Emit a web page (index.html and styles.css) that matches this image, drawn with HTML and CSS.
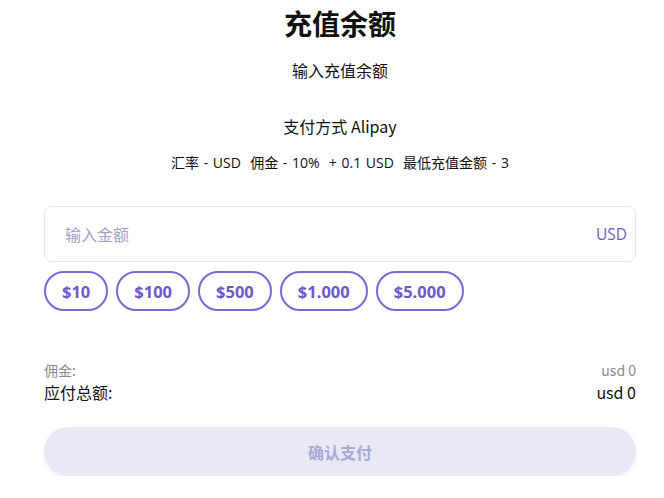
FILE: index.html
```html
<!DOCTYPE html>
<html lang="zh">
<head>
<meta charset="utf-8">
<link rel="stylesheet" href="styles.css">
</head>
<body>
<main class="page">
  <h1 class="title">充值余额</h1>
  <p class="subtitle">输入充值余额</p>
  <p class="method">支付方式 Alipay</p>
  <p class="rates">汇率 - USD&nbsp; 佣金 - 10% &nbsp;+ 0.1 USD&nbsp; 最低充值金额 - 3</p>
  <div class="amount">
    <span class="placeholder">输入金额</span>
    <span class="currency">USD</span>
  </div>
  <div class="chips">
    <button class="chip">$10</button>
    <button class="chip">$100</button>
    <button class="chip">$500</button>
    <button class="chip">$1.000</button>
    <button class="chip">$5.000</button>
  </div>
  <div class="summary">
    <div class="row row-fee"><span>佣金:</span><span>usd 0</span></div>
    <div class="row row-total"><span>应付总额:</span><span>usd 0</span></div>
  </div>
  <button class="confirm">确认支付</button>
</main>
</body>
</html>
```
FILE: styles.css
```css
* { box-sizing: border-box; }
html, body { margin: 0; padding: 0; background: #fff; }
body {
  font-family: "Noto Sans CJK SC", "Open Sans", sans-serif;
  color: #111;
}
.page {
  margin-left: 44px;
  width: 592px;
  display: flex;
  flex-direction: column;
}
.title {
  margin: 1px 0 0;
  text-align: center;
  font-size: 28px;
  font-weight: 700;
  line-height: 44px;
}
.subtitle {
  margin: 15px 0 0;
  text-align: center;
  font-size: 16px;
  line-height: 20px;
}
.method {
  margin: 35px 0 0;
  text-align: center;
  font-size: 16px;
  line-height: 22px;
}
.rates {
  margin: 17px 0 0;
  text-align: center;
  font-family: "Open Sans", "Noto Sans CJK SC", sans-serif;
  font-size: 14px;
  line-height: 18px;
  word-spacing: 1px;
}
.amount {
  margin-top: 34px;
  height: 56px;
  border: 1px solid #e6e7ef;
  border-radius: 8px;
  display: flex;
  align-items: center;
  justify-content: space-between;
  padding: 0 8px 0 20px;
  font-size: 16px;
}
.placeholder { color: #9ea2c4; }
.currency { color: #6b60b8; font-family: "Open Sans", sans-serif; font-size: 15.5px; }
.chips {
  margin-top: 9px;
  display: flex;
  gap: 8px;
}
.chip {
  height: 40px;
  padding: 0 16px;
  border: 2px solid #7b68d8;
  border-radius: 20px;
  background: #fff;
  color: #6b58cc;
  font-family: "Open Sans", sans-serif;
  font-weight: 700;
  font-size: 16.5px;
}
.summary {
  margin-top: 49px;
  display: flex;
  flex-direction: column;
}
.row {
  display: flex;
  justify-content: space-between;
}
.row-fee {
  font-size: 14px;
  line-height: 20px;
  color: #8a8a8a;
}
.row-total {
  font-size: 16px;
  line-height: 24px;
  color: #111;
}
.confirm {
  margin-top: 23px;
  height: 49px;
  border: none;
  border-radius: 25px;
  background: #e8e9f5;
  color: #a7aad6;
  font-family: "Noto Sans CJK SC", sans-serif;
  font-weight: 700;
  font-size: 16px;
  box-shadow: 0 2px 4px rgba(200, 200, 220, 0.25);
}
```
